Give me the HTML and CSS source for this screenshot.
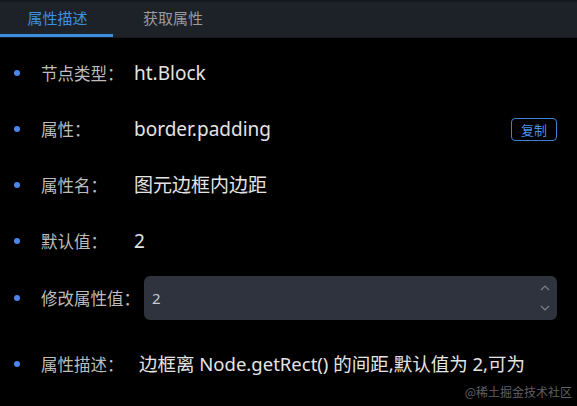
FILE: index.html
```html
<html>
<head>
<title>属性面板</title>
<link rel="stylesheet" href="styles.css">
</head>
<body>
<div class="tabs">
	<div class="tab active">属性描述</div>
	<div class="tab">获取属性</div>
</div>
<ul class="props">
	<li class="row">
		<span class="label">节点类型：</span>
		<span class="value">ht.Block</span>
	</li>
	<li class="row">
		<span class="label">属性：</span>
		<span class="value grow">border.padding</span>
		<button class="copy">复制</button>
	</li>
	<li class="row">
		<span class="label">属性名：</span>
		<span class="value">图元边框内边距</span>
	</li>
	<li class="row">
		<span class="label">默认值：</span>
		<span class="value">2</span>
	</li>
	<li class="row row-input">
		<span class="label">修改属性值：</span>
		<div class="number">
			<span class="num-text">2</span>
			<div class="spin">
				<svg width="12" height="8" viewBox="0 0 12 8"><path d="M2 6 L6 2 L10 6" fill="none" stroke="#7b808a" stroke-width="1.2"/></svg>
				<svg width="12" height="8" viewBox="0 0 12 8"><path d="M2 2 L6 6 L10 2" fill="none" stroke="#7b808a" stroke-width="1.2"/></svg>
			</div>
		</div>
	</li>
	<li class="row row-desc">
		<span class="label">属性描述：</span>
		<span class="value desc">边框离 Node.getRect() 的间距,默认值为 2,可为</span>
	</li>
</ul>
<div class="mark">@稀土掘金技术社区</div>
</body>
</html>
```
FILE: styles.css
```css
body {
	margin:0;
	background:#000;
	font-family:"Noto Sans","Noto Sans CJK SC",sans-serif;
	width:577px;
	height:406px;
	overflow:hidden;
	position:relative;
}
.tabs {
	display:flex;
	height:38px;
	background:#1d2128;
	border-top:2px solid #15181d;
	box-sizing:border-box;
	border-bottom:1px solid #16191e;
}
.tab {
	width:113px;
	box-sizing:border-box;
	text-align:center;
	font-size:15px;
	line-height:33px;
	color:#979aa0;
	padding-left:2px;
}
.tab + .tab {
	padding-left:30px;
	text-align:left;
}
.active {
	color:#3d8fe0;
	border-bottom:3px solid #3b8de0;
}
.props {
	list-style:none;
	margin:0;
	padding:22px 20px 0 14px;
	display:flex;
	flex-direction:column;
	gap:30px;
}
.row {
	display:flex;
	align-items:center;
	height:26px;
	font-size:16px;
}
.row::before {
	content:"";
	width:6px;
	height:6px;
	border-radius:50%;
	background:#4a86ee;
	margin-right:21px;
	flex:none;
}
.row-input {
	height:44px;
	margin-top:-8px;
}
.row-desc {
	margin-top:1px;
}
.label {
	min-width:93px;
	color:#bcbcbc;
	white-space:nowrap;
	font-size:16.5px;
}
.value {
	color:#e4e4e4;
	white-space:nowrap;
	font-size:19px;
	line-height:26px;
}
.grow {
	flex:1;
}
.desc {
	padding-left:5px;
	font-size:18.5px;
}
.copy {
	font-family:"Noto Sans CJK SC",sans-serif;
	background:transparent;
	border:1px solid #3b82d4;
	border-radius:4px;
	color:#4a92e6;
	font-size:13px;
	width:46px;
	height:23px;
	padding:0;
}
.number {
	flex:1;
	margin-left:4px;
	height:44px;
	background:#2e333d;
	border-radius:6px;
	display:flex;
	align-items:center;
	padding:0 6px 0 8px;
}
.num-text {
	flex:1;
	color:#c9ccd2;
	font-size:15px;
}
.spin {
	display:flex;
	flex-direction:column;
	gap:12px;
}
.mark {
	position:absolute;
	right:5px;
	bottom:7px;
	color:#5f6166;
	font-size:12px;
	line-height:14px;
	font-family:"Noto Sans CJK SC",sans-serif;
}
```
